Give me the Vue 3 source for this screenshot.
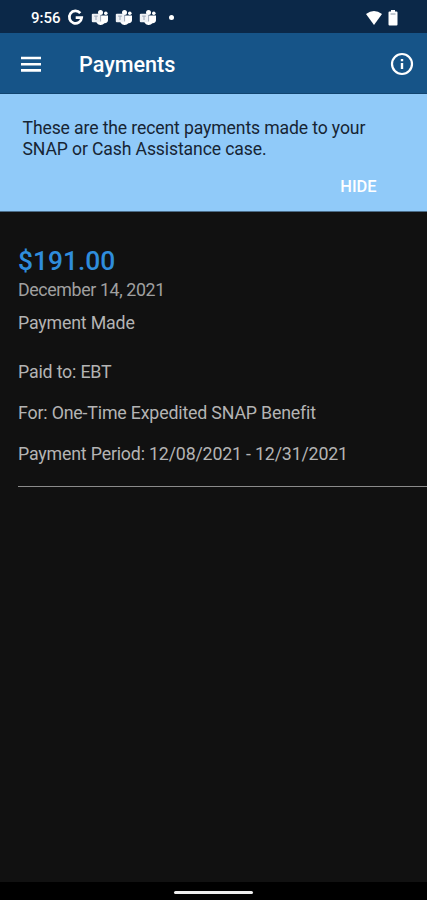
<script setup>
const details = [
  'Paid to: EBT',
  'For: One-Time Expedited SNAP Benefit',
  'Payment Period: 12/08/2021 - 12/31/2021',
]
</script>

<template>
  <div class="screen">
    <div class="status">
      <span class="time">9:56</span>
      <svg class="google" width="17" height="17" viewBox="0 0 17 17">
        <path d="M13.3 4.2A6.2 6.2 0 1 0 14.7 8.7H8.7" fill="none" stroke="#fff" stroke-width="2.7" />
      </svg>
      <svg v-for="n in 3" :key="n" class="teams" width="18" height="17" viewBox="0 0 18 17">
        <circle cx="9.5" cy="3.4" r="2.5" fill="#fff" />
        <circle cx="14.8" cy="4.2" r="1.8" fill="#fff" />
        <path d="M7 6.4h10v4.8a3.2 3.2 0 0 1-3.6 3.1A4.7 4.7 0 0 1 5.5 13.4V6.4z" fill="#fff" />
        <rect x="0.8" y="4.7" width="8.4" height="8.6" rx="1" fill="#eef1f5" />
        <path d="M3.2 7.2h3.6M5 7.2v3.8" stroke="#a9b4c2" stroke-width="1.2" />
        <path d="M9.6 7v5.5" stroke="#8996a8" stroke-width=".8" />
      </svg>
      <span class="dot"></span>
      <span class="spacer"></span>
      <svg class="wifi" width="18" height="16" viewBox="0 0 18 16">
        <path d="M1 4Q9-2 17 4L9 15z" fill="#fff" />
      </svg>
      <svg class="battery" width="10" height="16" viewBox="0 0 10 16">
        <path d="M3 0h4v1.5h1.5q1 0 1 1V14.5q0 1-1 1h-7q-1 0-1-1v-12q0-1 1-1H3z" fill="#fff" />
        <path d="M2.5 4h5" stroke="#8794a4" />
      </svg>
    </div>
    <header class="bar">
      <svg class="menu" width="20" height="16" viewBox="0 0 20 16">
        <path d="M0 2h20M0 8.2h20M0 14.4h20" stroke="#fff" stroke-width="2.6" />
      </svg>
      <h1>Payments</h1>
      <svg class="info" width="24" height="24" viewBox="0 0 24 24">
        <circle cx="12" cy="12" r="10" fill="none" stroke="#fff" stroke-width="2.2" />
        <path d="M12 7v2.2M12 11v6" stroke="#fff" stroke-width="2.4" />
      </svg>
    </header>
    <section class="notice">
      <p>These are the recent payments made to your<br />SNAP or Cash Assistance case.</p>
      <button>HIDE</button>
    </section>
    <main class="payment">
      <div class="amount">$191.00</div>
      <div class="date">December 14, 2021</div>
      <div class="state">Payment Made</div>
      <div v-for="line in details" :key="line" class="detail">{{ line }}</div>
    </main>
    <div class="nav"><span class="handle"></span></div>
  </div>
</template>

<style>
body {
  margin: 0;
  background: #111;
}
</style>

<style scoped>
.screen {
  width: 427px;
  height: 900px;
  display: flex;
  flex-direction: column;
  overflow: hidden;
  background: #111;
  font-family: Roboto, "Liberation Sans", sans-serif;
}
svg {
  display: block;
  flex: none;
}
.status {
  height: 33px;
  box-sizing: border-box;
  padding: 2px 29px 0 31px;
  display: flex;
  align-items: center;
  background: #0b2848;
  color: #fff;
}
.time {
  width: 36px;
  font-size: 15px;
  font-weight: 500;
  white-space: nowrap;
}
.google {
  margin-right: 7px;
}
.teams {
  margin-right: 6px;
}
.dot {
  width: 5px;
  height: 5px;
  margin-left: 6px;
  border-radius: 50%;
  background: #fff;
}
.spacer {
  flex: 1;
}
.wifi {
  margin-right: 5px;
}
.bar {
  height: 61px;
  box-sizing: border-box;
  padding: 1px 13.5px 0 21px;
  display: flex;
  align-items: center;
  background: #165488;
  border-bottom: 1px solid #104470;
  color: #fff;
}
h1 {
  flex: 1;
  margin: 3px 0 0 38px;
  font-size: 21.6px;
  line-height: 28px;
  font-weight: 500;
}
.notice {
  height: 118px;
  box-sizing: border-box;
  padding: 24px 46px 0 22.5px;
  display: flex;
  flex-direction: column;
  background: #90caf9;
  border-bottom: 1px solid #4c6d88;
  color: #172534;
}
.notice p {
  margin: 0;
  font-size: 17.6px;
  letter-spacing: -0.12px;
  line-height: 21px;
  white-space: nowrap;
}
button {
  align-self: flex-end;
  margin: 17px 4.5px 0 0;
  padding: 0;
  border: 0;
  background: none;
  color: #fff;
  font: 500 16.4px/20px Roboto, sans-serif;
}
.payment {
  margin-left: 18px;
  height: 275px;
  box-sizing: border-box;
  padding-top: 33px;
  border-bottom: 1px solid #8b8b8b;
  color: #b4b4b4;
  font-size: 17.8px;
  letter-spacing: -0.18px;
  white-space: nowrap;
}
.amount {
  font-size: 26.4px;
  letter-spacing: 0;
  line-height: 32px;
  font-weight: 500;
  color: #2f8ddc;
}
.date {
  letter-spacing: -0.37px;
  line-height: 26px;
  color: #a0a0a0;
}
.state {
  margin-top: 8px;
  margin-bottom: 16px;
  line-height: 24px;
}
.detail {
  line-height: 41px;
}
.nav {
  margin-top: auto;
  height: 18px;
  display: flex;
  justify-content: center;
  align-items: center;
  background: #000;
}
.handle {
  width: 79px;
  height: 3px;
  margin-top: 2px;
  border-radius: 2px;
  background: #eee;
}
</style>
